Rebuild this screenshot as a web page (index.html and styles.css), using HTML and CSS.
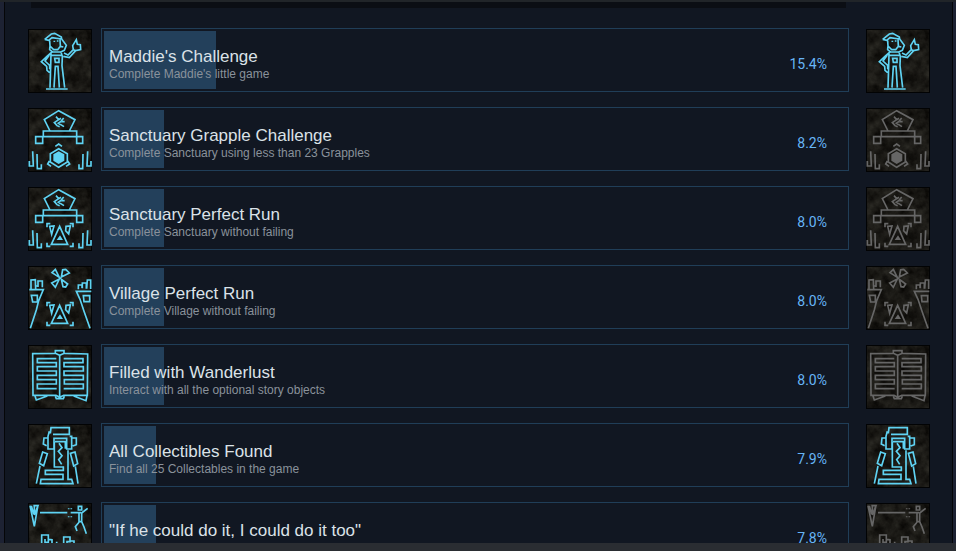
FILE: index.html
```html
<!DOCTYPE html>
<html lang="en">
<head>
  <meta charset="utf-8">
  <title>Global Achievements</title>
  <link rel="stylesheet" href="styles.css">
</head>
<body>
  <!-- Icon artwork, shared by both columns -->
  <svg class="sprites" aria-hidden="true">
    <filter id="grain" x="0" y="0" width="100%" height="100%" color-interpolation-filters="sRGB">
      <feTurbulence type="fractalNoise" baseFrequency="0.09" numOctaves="4" seed="7"/>
      <feColorMatrix values="0.22 0 0 0 -0.01  0.22 0 0 0 -0.015  0.2 0 0 0 -0.02  0 0 0 0 1"/>
    </filter>
    <symbol id="stone" viewBox="0 0 64 64">
      <rect class="edge" width="64" height="64"/>
      <rect class="edge" x="1" y="1" width="62" height="62" filter="url(#grain)"/>
    </symbol>
    <symbol id="maddie" viewBox="12 12 192 192">
      <path d="M62 43L82 27L92 25L112 36L113 42L84 38L74 46L62 43M77 47L78 63L89 74L101 74L109 64L108 43M78 63L77 74L86 81L110 81L121 76L127 61L113 42M109 64L118 66M91 47V51M101 46V50M84 81L68 95L52 110L68 124L69 136L76 142M76 90L63 108L77 121V133M81 86L80 124L78 188M82 91H112M111 81L115 94L114 122L122 188M92 100H105V112H94ZM90 188L94 124H102L106 188M66 192H131M120 84L132 90L148 74M118 94L136 98L155 77M148 74L146 62L157 44L160 58L169 59L170 74L155 77L148 74"/>
    </symbol>
    <symbol id="altar" viewBox="12 12 192 192">
      <path d="M78 81L61 47L104 20L153 47L136 81M58 81H158V98H58ZM35 98H56V118H35ZM158 98H176V118H158ZM58 98H158M96 38L104 47L91 56L99 65L107 68M104 47L111 43M111 52L103 58L109 62M119 42L111 52M111 53H122M109 61L120 68M26 142L28 186H16V171M39 150L40 194H52V181M191 142L189 186H201V171M177 150L176 194H165V181"/>
    </symbol>
    <symbol id="grapple" viewBox="12 12 192 192">
      <path d="M104 134L130 149V174L104 190L79 174V149ZM94 127L104 120L114 127M76 171L71 180L81 187M131 171L137 180L126 187"/>
      <path class="solid" d="M104 142L121 151V170L104 180L88 170V151Z"/>
    </symbol>
    <symbol id="perfect" viewBox="12 12 192 192">
      <path d="M107 130L131 184H82ZM77 130L90 129L83 154ZM126 130L139 129L134 153L125 143ZM69 133V122H79M137 122H147V133M69 179V190H79M137 190H147V179"/>
      <path class="solid" d="M108 157L117 171H98Z"/>
    </symbol>
    <symbol id="village" viewBox="12 12 192 192">
      <path d="M106 46L84 32L94 22ZM112 45L116 23L125 22L136 33ZM106 51L83 63L94 76ZM112 52L117 74L125 75L131 66ZM16 83H58L44 116L37 144L19 199M21 81V54L34 53L35 81M42 75V57H55V76M42 72H36M22 100H40V120H26ZM202 88H157L168 112L180 148L198 199M163 82V69H174V78M175 79V63H187V80M188 80L190 54H200V81M178 101H197V119H180Z"/>
    </symbol>
    <symbol id="book" viewBox="12 12 192 192">
      <path d="M26 38L94 37L107 43L121 37L191 39L190 163H119L107 169L96 163H27ZM107 43V168M94 36V29H120V36M97 53H40V65H97V77H40V90H97V103H40V116H97V129H40V143H98M119 53H177V65H120V77H178V90H120V103H178V116H121V129H178V143H119M33 165L37 177L70 165M149 165L186 179L189 164M94 166L97 173H118L121 166"/>
    </symbol>
    <symbol id="statue" viewBox="12 12 192 192">
      <path d="M79 40L81 23H136V43H87M76 34L72 49V87H90V55H128V87H143V49H137M70 54H60L58 72L68 77M145 54H157V74L146 78M91 65V141H118V151H64V163H117V178H51L49 191H147L143 178H132V91M93 65H124V86M105 70L114 83L103 94L114 107L104 119L113 133M56 96L70 101L59 137L46 130ZM139 100L153 96L161 131L149 138ZM48 138L37 191M154 139L162 191"/>
    </symbol>
    <symbol id="ropes" viewBox="12 12 192 192">
      <path d="M18 20L31 82L42 18M22 20L29 45M28 20H42L31 48V20M48 41H130M140 41H171M163 22H173V33H163ZM191 28L173 42V68H165V42M173 68L180 84L187 104M165 70L154 83L159 96M134 28V31M142 28V31M134 52V55M142 52V55M53 138V108H73V130H63V120M73 121L84 122V138H98V128M119 140V114H138V128H129V137M138 126H150V140M28 136H39"/>
    </symbol>
  </svg>

  <main class="panel">
    <div class="divider"></div>
    <ul class="achievements">
      <li class="achieve-row">
        <svg class="achieve-icon"><use href="#stone"/><use href="#maddie"/></svg>
        <div class="achieve-box">
          <div class="achieve-bar"><div class="fill" style="width: 15%"></div></div>
          <div class="achieve-info">
            <div class="achieve-text">
              <h3>Maddie's Challenge</h3>
              <p>Complete Maddie's little game</p>
            </div>
            <span class="percent">15.4%</span>
          </div>
        </div>
        <svg class="achieve-icon"><use href="#stone"/><use href="#maddie"/></svg>
      </li>
      <li class="achieve-row">
        <svg class="achieve-icon"><use href="#stone"/><use href="#altar"/><use href="#grapple"/></svg>
        <div class="achieve-box">
          <div class="achieve-bar"><div class="fill" style="width: 8%"></div></div>
          <div class="achieve-info">
            <div class="achieve-text">
              <h3>Sanctuary Grapple Challenge</h3>
              <p>Complete Sanctuary using less than 23 Grapples</p>
            </div>
            <span class="percent">8.2%</span>
          </div>
        </div>
        <svg class="achieve-icon locked"><use href="#stone"/><use href="#altar"/><use href="#grapple"/></svg>
      </li>
      <li class="achieve-row">
        <svg class="achieve-icon"><use href="#stone"/><use href="#altar"/><use href="#perfect"/></svg>
        <div class="achieve-box">
          <div class="achieve-bar"><div class="fill" style="width: 8%"></div></div>
          <div class="achieve-info">
            <div class="achieve-text">
              <h3>Sanctuary Perfect Run</h3>
              <p>Complete Sanctuary without failing</p>
            </div>
            <span class="percent">8.0%</span>
          </div>
        </div>
        <svg class="achieve-icon locked"><use href="#stone"/><use href="#altar"/><use href="#perfect"/></svg>
      </li>
      <li class="achieve-row">
        <svg class="achieve-icon"><use href="#stone"/><use href="#village"/><use href="#perfect"/></svg>
        <div class="achieve-box">
          <div class="achieve-bar"><div class="fill" style="width: 8%"></div></div>
          <div class="achieve-info">
            <div class="achieve-text">
              <h3>Village Perfect Run</h3>
              <p>Complete Village without failing</p>
            </div>
            <span class="percent">8.0%</span>
          </div>
        </div>
        <svg class="achieve-icon locked"><use href="#stone"/><use href="#village"/><use href="#perfect"/></svg>
      </li>
      <li class="achieve-row">
        <svg class="achieve-icon"><use href="#stone"/><use href="#book"/></svg>
        <div class="achieve-box">
          <div class="achieve-bar"><div class="fill" style="width: 8%"></div></div>
          <div class="achieve-info">
            <div class="achieve-text">
              <h3>Filled with Wanderlust</h3>
              <p>Interact with all the optional story objects</p>
            </div>
            <span class="percent">8.0%</span>
          </div>
        </div>
        <svg class="achieve-icon locked"><use href="#stone"/><use href="#book"/></svg>
      </li>
      <li class="achieve-row">
        <svg class="achieve-icon"><use href="#stone"/><use href="#statue"/></svg>
        <div class="achieve-box">
          <div class="achieve-bar"><div class="fill" style="width: 7%"></div></div>
          <div class="achieve-info">
            <div class="achieve-text">
              <h3>All Collectibles Found</h3>
              <p>Find all 25 Collectables in the game</p>
            </div>
            <span class="percent">7.9%</span>
          </div>
        </div>
        <svg class="achieve-icon"><use href="#stone"/><use href="#statue"/></svg>
      </li>
      <li class="achieve-row">
        <svg class="achieve-icon"><use href="#stone"/><use href="#ropes"/></svg>
        <div class="achieve-box">
          <div class="achieve-bar"><div class="fill" style="width: 7%"></div></div>
          <div class="achieve-info">
            <div class="achieve-text">
              <h3>"If he could do it, I could do it too"</h3>
            </div>
            <span class="percent">7.8%</span>
          </div>
        </div>
        <svg class="achieve-icon locked"><use href="#stone"/><use href="#ropes"/></svg>
      </li>
    </ul>
  </main>
  <footer class="status-bar"></footer>
</body>
</html>
```
FILE: styles.css
```css
* {
  box-sizing: border-box;
}

body {
  margin: 0;
  height: 100vh;
  display: flex;
  flex-direction: column;
  overflow: hidden;
  background: #1d2233;
  border-top: 2px solid #212529;
  font-family: Arial, "Liberation Sans", sans-serif;
}

.sprites {
  position: absolute;
  width: 0;
  height: 0;
}

.panel {
  flex: 1;
  min-height: 0;
  overflow: hidden;
  margin: 0 3px 0 4px;
  padding: 0 22px 0 23px;
  background: #111722;
  border: solid #050608;
  border-width: 0 1px;
}

.divider {
  height: 6px;
  margin: 0 84px 20px 3px;
  background: #0b0e14;
}

.achievements {
  margin: 0;
  padding: 0;
  list-style: none;
  display: flex;
  flex-direction: column;
  gap: 14px;
}

.achieve-row {
  display: flex;
  align-items: flex-end;
}

.achieve-icon {
  flex: none;
  width: 64px;
  height: 64px;
  fill: none;
  stroke: #5fd3f3;
  stroke-width: 5;
  color: #5fd3f3;
}

.achieve-icon.locked {
  stroke: #666;
  color: #666;
}

.edge {
  fill: #020304;
  stroke: none;
}

.solid {
  fill: currentColor;
  stroke: none;
}

.achieve-box {
  flex: 1;
  display: grid;
  height: 64px;
  margin: 0 17px 1px 9px;
  border: 1px solid #203e58;
}

/* bar and text share the same grid cell */
.achieve-bar,
.achieve-info {
  grid-area: 1 / 1;
}

.achieve-bar {
  padding: 2px 0;
}

.fill {
  height: 100%;
  margin-left: 2px;
  background: #23405b;
}

.achieve-info {
  display: flex;
  justify-content: space-between;
  align-items: flex-start;
  padding: 18px 21px 10px 7px;
}

h3 {
  margin: 0;
  font-size: 17px;
  font-weight: normal;
  line-height: 20px;
  color: #dbe2e8;
}

p {
  margin: 0;
  font-size: 12px;
  line-height: 14px;
  color: #8a929b;
}

.percent {
  font-family: Roboto, Arial, sans-serif;
  font-size: 14px;
  line-height: 34px;
  color: #67b5f6;
}

.status-bar {
  flex: none;
  height: 8px;
  background: #2a2d32;
}
```
